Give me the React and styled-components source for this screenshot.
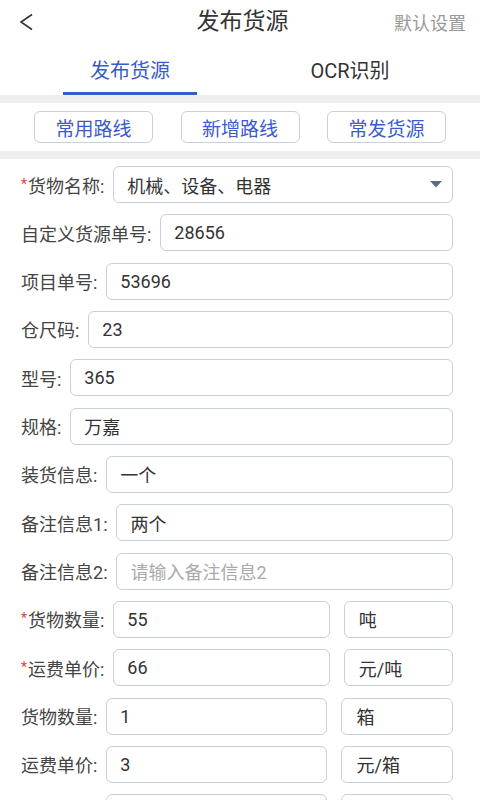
import React from 'react';
import styled, { createGlobalStyle } from 'styled-components';

const GlobalStyle = createGlobalStyle`
  html, body {
    margin: 0;
    padding: 0;
    background: #ffffff;
  }
  * {
    box-sizing: border-box;
  }
  body {
    font-family: Roboto, 'Noto Sans CJK SC', sans-serif;
    color: #333;
  }
`;

const BLUE = '#3a5bcc';

const FIELDS = [
  { label: '货物名称', required: true, value: '机械、设备、电器', select: true },
  { label: '自定义货源单号', value: '28656' },
  { label: '项目单号', value: '53696' },
  { label: '仓尺码', value: '23' },
  { label: '型号', value: '365' },
  { label: '规格', value: '万嘉' },
  { label: '装货信息', value: '一个' },
  { label: '备注信息1', value: '两个' },
  { label: '备注信息2', placeholder: '请输入备注信息2' },
  { label: '货物数量', required: true, value: '55', unit: '吨' },
  { label: '运费单价', required: true, value: '66', unit: '元/吨' },
  { label: '货物数量', value: '1', unit: '箱' },
  { label: '运费单价', value: '3', unit: '元/箱' },
  { label: '运费总价', value: '3', unit: '元' },
];

function App() {
  return (
    <Page>
      <GlobalStyle />
      <Header>
        <BackButton>
          <svg width="16" height="18" viewBox="0 0 16 18">
            <polyline
              points="13,1.5 2,9 13,16.5"
              fill="none"
              stroke="#333"
              strokeWidth="1.6"
              strokeLinejoin="miter"
            />
          </svg>
        </BackButton>
        <Title>发布货源</Title>
        <HeaderAction>默认设置</HeaderAction>
      </Header>

      <Tabs>
        <Tab>
          <TabLabel active>发布货源</TabLabel>
        </Tab>
        <Tab>
          <TabLabel>OCR识别</TabLabel>
        </Tab>
      </Tabs>

      <Divider />

      <QuickBar>
        <QuickButton>常用路线</QuickButton>
        <QuickButton>新增路线</QuickButton>
        <QuickButton>常发货源</QuickButton>
      </QuickBar>

      <Divider />

      <Form>
        {FIELDS.map((f, i) => (
          <Row key={i}>
            <Label>
              {f.required && <Star>*</Star>}
              {f.label}:
            </Label>
            <Field grow={2}>
              <FieldText placeholder={!f.value}>{f.value || f.placeholder}</FieldText>
              {f.select && (
                <Caret width="12" height="7" viewBox="0 0 12 7">
                  <polygon points="0,0 12,0 6,6.5" fill="#5b6b88" />
                </Caret>
              )}
            </Field>
            {f.unit && (
              <Field grow={1}>
                <FieldText unit>{f.unit}</FieldText>
              </Field>
            )}
          </Row>
        ))}
      </Form>
    </Page>
  );
}

export default App;

const Page = styled.div`
  width: 480px;
  height: 800px;
  overflow: hidden;
  background: #fff;
`;

const Header = styled.div`
  height: 44px;
  display: flex;
  align-items: center;
  justify-content: space-between;
  padding: 0 14px 0 19px;
`;

const BackButton = styled.div`
  width: 80px;
  display: flex;
  align-items: center;
`;

const Title = styled.div`
  font-size: 23px;
  color: #333;
  line-height: 44px;
`;

const HeaderAction = styled.div`
  width: 80px;
  text-align: right;
  font-size: 18px;
  color: #999;
`;

const Tabs = styled.div`
  display: flex;
  padding: 0 20px;
  height: 51px;
`;

const Tab = styled.div`
  flex: 1;
  display: flex;
  justify-content: center;
`;

const TabLabel = styled.div`
  padding: 13px 27px 7px;
  line-height: 28px;
  font-size: 20px;
  color: ${({ active }) => (active ? BLUE : '#333')};
  border-bottom: 3px solid ${({ active }) => (active ? BLUE : 'transparent')};
`;

const Divider = styled.div`
  height: 8px;
  background: #efefef;
`;

const QuickBar = styled.div`
  display: flex;
  justify-content: space-between;
  padding: 8px 34px;
`;

const QuickButton = styled.div`
  width: 119px;
  height: 32px;
  display: flex;
  align-items: center;
  justify-content: center;
  border: 1px solid #c8d0da;
  border-radius: 6px;
  font-size: 19px;
  color: ${BLUE};
`;

const Form = styled.div`
  padding: 7px 27px 0 21px;
  display: flex;
  flex-direction: column;
  gap: 11.33px;
`;

const Row = styled.div`
  display: flex;
  align-items: center;
  gap: 14px;
`;

const Label = styled.div`
  font-size: 18px;
  color: #444;
  white-space: nowrap;
  margin-right: -5px;
  display: flex;
  align-items: center;
`;

const Star = styled.span`
  color: #e0463c;
  font-size: 14px;
  width: 7px;
  margin-top: -2px;
`;

const Field = styled.div`
  flex: ${({ grow }) => grow} 1 0px;
  min-width: 0;
  height: 37px;
  border: 1px solid #c8d0da;
  border-radius: 6px;
  display: flex;
  align-items: center;
  justify-content: space-between;
  overflow: hidden;
`;

const FieldText = styled.span`
  margin-left: ${({ unit }) => (unit ? 14 : 13)}px;
  font-size: 18px;
  color: ${({ placeholder }) => (placeholder ? '#aaa' : '#333')};
  white-space: nowrap;
`;

const Caret = styled.svg`
  margin-right: 10px;
  flex-shrink: 0;
`;
